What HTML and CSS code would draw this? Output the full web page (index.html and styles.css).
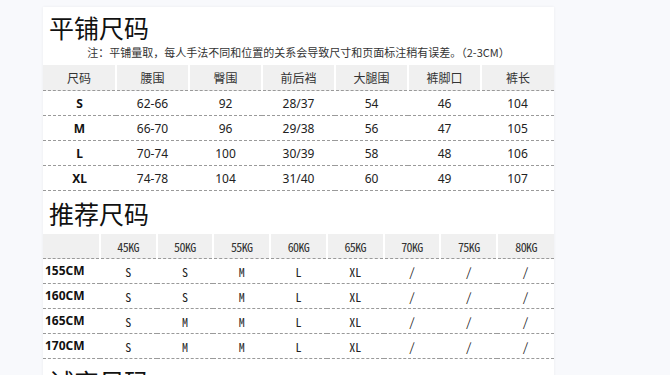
FILE: index.html
```html
<!DOCTYPE html>
<html lang="zh">
<head>
<meta charset="utf-8">
<link rel="stylesheet" href="styles.css">
</head>
<body>
<div class="page">
  <div class="panel">
    <h2 class="heading heading-first">平铺尺码</h2>
    <p class="note">注：平铺量取，每人手法不同和位置的关系会导致尺寸和页面标注稍有误差。（2-3CM）</p>
    <table class="size-table">
      <thead>
        <tr><th>尺码</th><th>腰围</th><th>臀围</th><th>前后裆</th><th>大腿围</th><th>裤脚口</th><th>裤长</th></tr>
      </thead>
      <tbody>
        <tr><td class="size">S</td><td>62-66</td><td>92</td><td>28/37</td><td>54</td><td>46</td><td>104</td></tr>
        <tr><td class="size">M</td><td>66-70</td><td>96</td><td>29/38</td><td>56</td><td>47</td><td>105</td></tr>
        <tr><td class="size">L</td><td>70-74</td><td>100</td><td>30/39</td><td>58</td><td>48</td><td>106</td></tr>
        <tr><td class="size">XL</td><td>74-78</td><td>104</td><td>31/40</td><td>60</td><td>49</td><td>107</td></tr>
      </tbody>
    </table>
    <h2 class="heading">推荐尺码</h2>
    <table class="rec-table">
      <thead>
        <tr><th></th><th>45KG</th><th>50KG</th><th>55KG</th><th>60KG</th><th>65KG</th><th>70KG</th><th>75KG</th><th>80KG</th></tr>
      </thead>
      <tbody>
        <tr><td class="height">155CM</td><td>S</td><td>S</td><td>M</td><td>L</td><td>XL</td><td>/</td><td>/</td><td>/</td></tr>
        <tr><td class="height">160CM</td><td>S</td><td>S</td><td>M</td><td>L</td><td>XL</td><td>/</td><td>/</td><td>/</td></tr>
        <tr><td class="height">165CM</td><td>S</td><td>M</td><td>M</td><td>L</td><td>XL</td><td>/</td><td>/</td><td>/</td></tr>
        <tr><td class="height">170CM</td><td>S</td><td>M</td><td>M</td><td>L</td><td>XL</td><td>/</td><td>/</td><td>/</td></tr>
      </tbody>
    </table>
    <h2 class="heading">试穿尺码</h2>
  </div>
</div>
</body>
</html>
```
FILE: styles.css
```css
html, body {
  margin: 0;
  padding: 0;
  background: #f8f9fc;
  overflow: hidden;
}

.page {
  padding: 7px 0 0 43px;
}

.panel {
  width: 511px;
  background: #ffffff;
  box-shadow: 0 0 3px rgba(0, 0, 0, 0.06);
  font-family: "Noto Sans", "Noto Sans CJK SC", sans-serif;
  color: #222;
  padding-bottom: 40px;
}

.heading {
  margin: 7px 0 6px 0;
  padding-left: 6px;
  font-family: "Noto Sans CJK SC", sans-serif;
  font-weight: 400;
  font-size: 25px;
  line-height: 30px;
  color: #111;
}

.heading-first {
  margin-top: 0;
  padding-top: 5px;
  margin-bottom: 0;
}

.note {
  margin: 2px 0 5px 0;
  text-align: center;
  font-family: "Noto Sans CJK SC", sans-serif;
  font-size: 11px;
  line-height: 16px;
  color: #333;
}

table {
  width: 511px;
  border-collapse: collapse;
  table-layout: fixed;
}

th {
  background: #f0f0f0;
  font-weight: 400;
  color: #333;
  border-left: 2px solid #fff;
  border-bottom: 1px dashed #9a9a9a;
  padding: 0;
  text-align: center;
}

th:first-child {
  border-left: none;
}

td {
  padding: 0;
  text-align: center;
  border-bottom: 1px dashed #9a9a9a;
  height: 24px;
}

.size-table th {
  height: 25px;
  font-family: "Noto Sans CJK SC", sans-serif;
  font-size: 12px;
}

.size-table td {
  font-size: 12px;
  color: #222;
}

.size-table td.size {
  font-weight: 700;
  color: #111;
}

.rec-table th {
  height: 24px;
  font-family: "Noto Sans Mono CJK SC", "DejaVu Sans Mono", monospace;
  font-size: 12px;
  letter-spacing: -0.6px;
}

.rec-table td {
  font-family: "Noto Sans Mono CJK SC", "DejaVu Sans Mono", monospace;
  font-size: 12px;
  color: #222;
}

.rec-table td.height {
  text-align: left;
  padding-left: 2px;
  font-family: "Noto Sans", sans-serif;
  font-weight: 700;
  font-size: 12px;
  color: #111;
  vertical-align: top;
  padding-top: 3px;
  height: 21px;
}
```
